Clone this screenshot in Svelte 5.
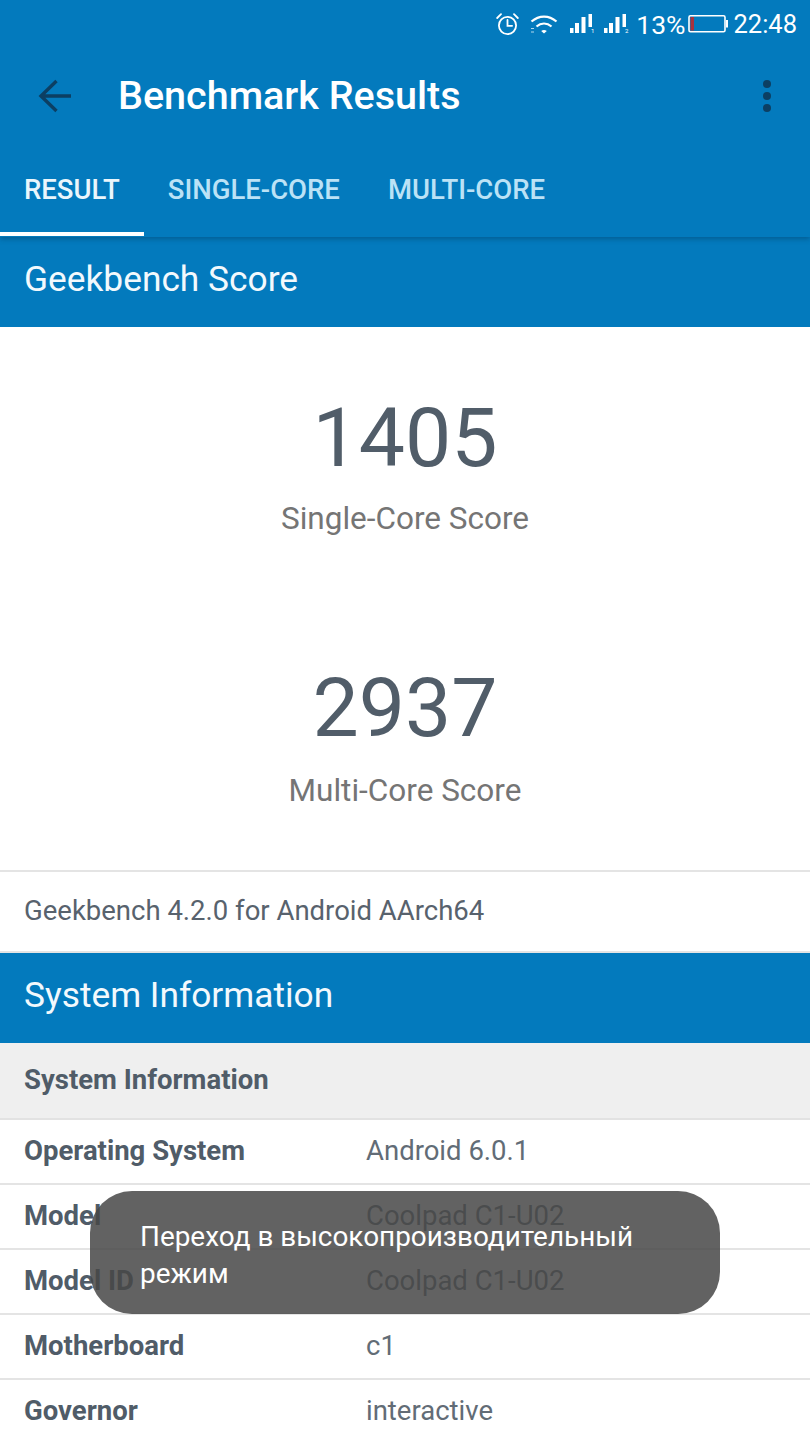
<script>
  // Geekbench result page with a system toast on top
  const rows = [
    ["Operating System", "Android 6.0.1"],
    ["Model", "Coolpad C1-U02"],
    ["Model ID", "Coolpad C1-U02"],
    ["Motherboard", "c1"],
    ["Governor", "interactive"]
  ];
  const sims = ["1", "2"];
</script>

<div class="page">
  <header class="bar">
    <div class="status">
      <svg class="ic" width="24" height="36" viewBox="0 0 24 36" fill="none" stroke="currentColor" stroke-width="1.8" stroke-linecap="round">
        <circle cx="12.500" cy="19.500" r="8.600" />
        <path d="M12.500 14v5.800h4.600M2.200 12l3.800-3.800M22.800 12l-3.800-3.800" />
      </svg>
      <svg class="ic wifi" width="28" height="36" viewBox="0 0 28 36" fill="none" stroke="currentColor" stroke-width="2.200">
        <path d="M1.500 15.500c7.500-6.600 17.500-6.600 25 0M6.500 20.500c4.500-4 10.500-4 15 0" />
        <path d="M11.200 25c1.700-1.200 3.900-1.200 5.600 0L14 27.500z" fill="currentColor" stroke="none" />
        <path d="M1 22.500h3M1 26h3" stroke-width="1" opacity=".7" />
      </svg>
      {#each sims as s}
        <svg class="ic sig" width="26" height="36" viewBox="0 0 26 36" fill="currentColor">
          <rect x="1" y="22" width="3.500" height="5" /><rect x="6" y="17" width="4" height="10" /><rect x="12.500" y="11" width="4" height="16" />
          <rect x="19.500" y="8" width="3.500" height="13" /><text x="22" y="27" font-size="6" font-family="Roboto, sans-serif">{s}</text>
        </svg>
      {/each}
      <span class="pct">13%</span>
      <svg class="ic batt" width="40" height="36" viewBox="0 0 40 36" fill="none">
        <rect x="1" y="9.800" width="36" height="16" rx="1.500" stroke="currentColor" stroke-width="1.600" />
        <rect x="2.500" y="11" width="3.500" height="13.500" fill="#a8323f" />
        <rect x="38" y="14" width="2" height="7.500" fill="currentColor" />
      </svg>
      <span class="clock">22:48</span>
    </div>

    <div class="toolbar">
      <svg class="back" width="36" height="36" viewBox="0 0 36 36" fill="none" stroke="#0c3f63" stroke-width="3.400">
        <path d="M35 18H5M20.500 3L5 18l15.500 15" />
      </svg>
      <h1>Benchmark Results</h1>
      <div class="more"><i></i><i></i><i></i></div>
    </div>

    <nav class="tabs">
      <div class="tab active">RESULT</div>
      <div class="tab">SINGLE-CORE</div>
      <div class="tab">MULTI-CORE</div>
    </nav>
  </header>

  <h2 class="section first">Geekbench Score</h2>

  <div class="scores">
    <div class="score">
      <div class="num">1405</div>
      <div class="label">Single-Core Score</div>
    </div>
    <div class="score">
      <div class="num">2937</div>
      <div class="label">Multi-Core Score</div>
    </div>
  </div>

  <div class="version">Geekbench 4.2.0 for Android AArch64</div>

  <h2 class="section">System Information</h2>

  <div class="thead">System Information</div>
  {#each rows as r}
    <div class="row">
      <span class="key">{r[0]}</span>
      <span class="val">{r[1]}</span>
    </div>
  {/each}

  <div class="toast">Переход в высокопроизводительный режим</div>
</div>

<style>
  :global(body) { margin: 0; background: #fff; }
  .page { position: relative; width: 810px; height: 1440px; overflow: hidden; font-family: Roboto, "Liberation Sans", sans-serif; background: #fff; }

  .bar { background: #037abd; height: 237px; box-shadow: 0 2px 5px rgba(0, 40, 70, 0.35); position: relative; }
  .status { height: 48px; display: flex; align-items: center; justify-content: flex-end; padding-right: 13px; color: #fff; font-size: 25.500px; }
  .ic { flex: none; display: block; }
  .wifi { margin-left: 11px; }
  .sig { margin-left: 11px; }
  .sig + .sig { margin-left: 8px; }
  .pct { margin-left: 7px; font-size: 26.500px; }
  .batt { margin-left: 3px; }
  .clock { margin-left: 5px; }

  .toolbar { height: 96px; display: flex; align-items: center; padding: 0 39px 0 36px; }
  .back { flex: none; }
  h1 { margin: 0 0 2px 46px; flex: 1; font-size: 39.500px; font-weight: 500; color: #fff; }
  .more { display: flex; flex-direction: column; gap: 4px; }
  .more i { display: block; width: 8px; height: 8px; border-radius: 50%; background: #0c3f63; }

  .tabs { height: 93px; display: flex; }
  .tab { padding: 0 24px; font-size: 27.500px; font-weight: 500; line-height: 92px; color: #bbe2f6; box-sizing: border-box; height: 92px; }
  .tab.active { color: #eaf6fc; border-bottom: 4px solid #fff; height: 92px; }

  .section { margin: 0; height: 90px; box-sizing: border-box; padding-left: 24px; background: #037abd; color: #f2f9fd; font-size: 35.300px; font-weight: 400; line-height: 85px; }

  .scores { height: 543px; box-sizing: border-box; padding-top: 65px; display: flex; flex-direction: column; gap: 125px; text-align: center; }
  .num { font-size: 82.300px; line-height: 92px; color: #515d69; }
  .label { font-size: 31.500px; line-height: 36px; margin-top: 17px; color: #757575; }
  .score + .score .label { margin-top: 19px; }

  .version { height: 83px; box-sizing: border-box; border-top: 2px solid #e4e4e4; border-bottom: 2px solid #e4e4e4; padding-left: 24px; font-size: 27.500px; line-height: 77px; color: #58626d; }

  .thead { height: 77px; box-sizing: border-box; border-bottom: 2px solid #e2e2e2; padding-left: 24px; background: #efefef; font-size: 27.500px; font-weight: 700; line-height: 74px; color: #505c68; }
  .row { height: 65px; box-sizing: border-box; border-bottom: 2px solid #e4e4e4; display: flex; font-size: 27.500px; line-height: 61px; color: #505c68; }
  .key { width: 366px; flex: none; box-sizing: border-box; padding-left: 24px; font-weight: 700; }
  .val { color: #626c76; }

  .toast { position: absolute; left: 90px; top: 1191px; width: 630px; height: 123px; box-sizing: border-box; padding: 27px 50px 0; border-radius: 42px; background: rgba(70, 70, 70, 0.85); color: #fff; font-size: 27.900px; line-height: 37px; }
</style>
